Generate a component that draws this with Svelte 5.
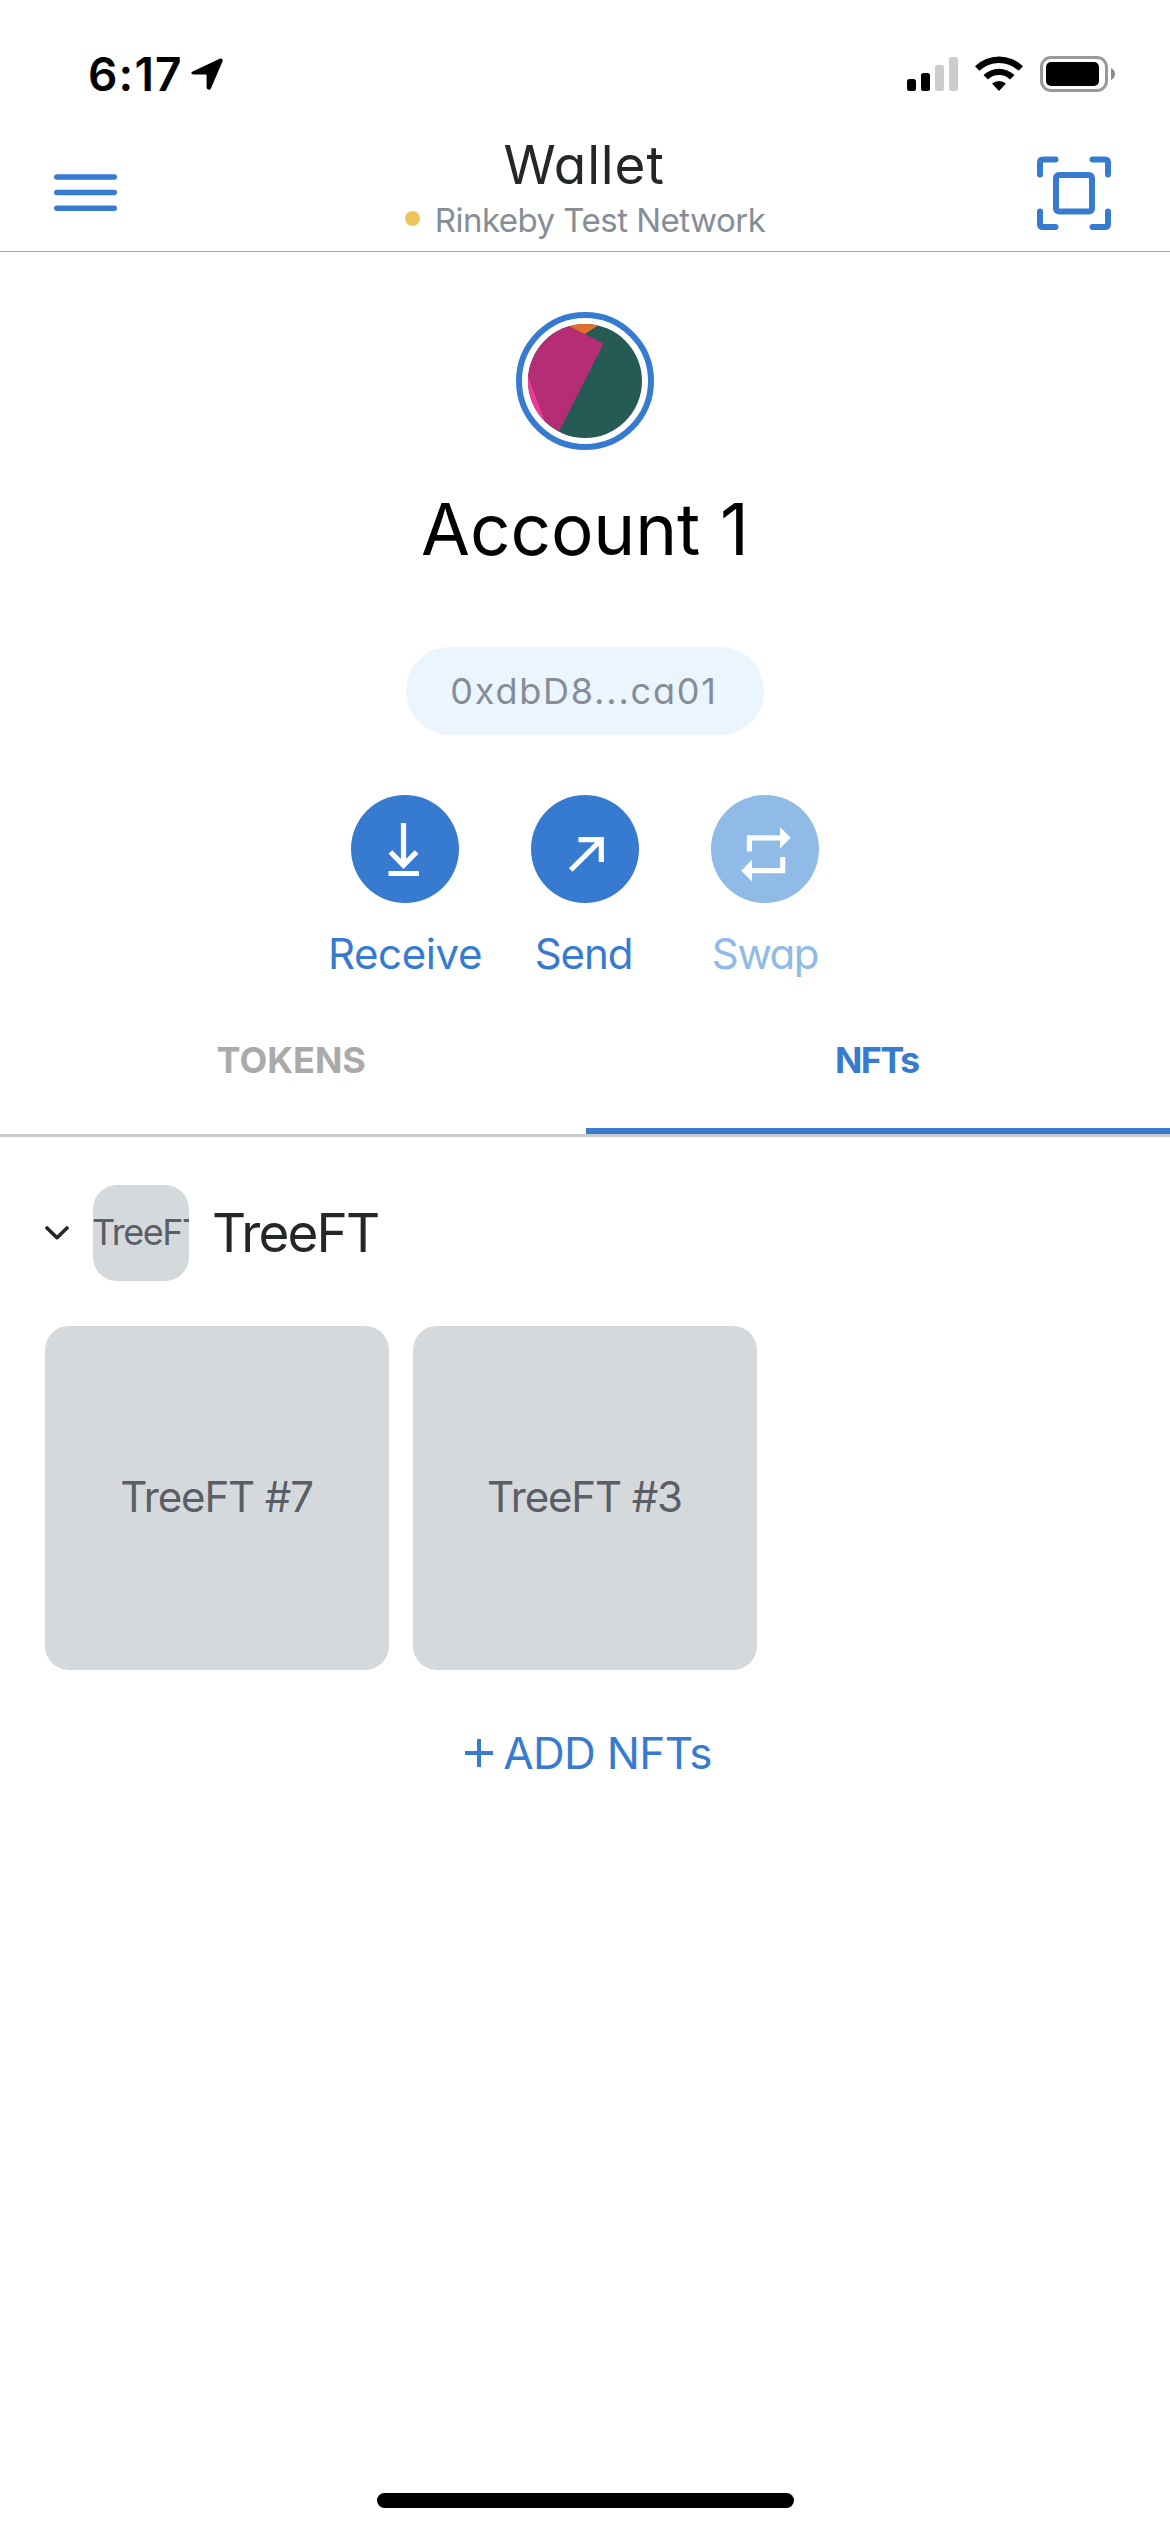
<script>
  const actions = [
    { id: 'receive', label: 'Receive' },
    { id: 'send', label: 'Send' },
    { id: 'swap', label: 'Swap', disabled: true }
  ];
  const nfts = ['TreeFT #7', 'TreeFT #3'];
</script>

<div class="screen">
  <div class="status">
    <span class="time">6:17</span>
    <svg class="location" width="32" height="33" viewBox="0 0 32 33">
      <path d="M2.2 13.2 28.6.7C30.8-.2 32.4 1.400 31.500 3.600L20 30.200C19 32.600 15.600 32 15.600 29.300V17.400Q15.600 16.400 14.600 16.400H2.800C-.3 16.400-.6 14.400 2.200 13.200Z" fill="#000" />
    </svg>
    <div class="indicators">
      <svg width="51" height="34" viewBox="0 0 51 34">
        <rect x="0" y="22" width="9" height="12" rx="2.500" />
        <rect x="14" y="16" width="9" height="18" rx="2.500" />
        <rect x="28" y="8" width="9" height="26" rx="2.500" fill="#ccc" />
        <rect x="42" y="0" width="9" height="34" rx="2.500" fill="#ccc" />
      </svg>
      <svg class="wifi" width="50" height="36" viewBox="0 0 50 36">
        <path d="M1 11.300A34.500 34.500 0 0 1 49 11.300L44.600 15.800A28.300 28.300 0 0 0 5.400 15.800Z" />
        <path d="M9.500 20A22.500 22.500 0 0 1 40.500 20L36 24.500A16 16 0 0 0 14 24.500Z" />
        <path d="M18 28.600A10.500 10.500 0 0 1 32 28.600L25 36Z" />
      </svg>
      <svg class="battery" width="76" height="36" viewBox="0 0 76 36">
        <rect x="1.500" y="1.500" width="65" height="33" rx="9.500" fill="none" stroke="#999" stroke-width="3" />
        <rect x="6" y="6" width="53" height="24" rx="5" />
        <path d="M71 12Q75 14 75 18Q75 22 71 24Z" fill="#8c8c8c" />
      </svg>
    </div>
  </div>

  <header>
    <svg class="menu" width="63" height="38" viewBox="0 0 63 38" stroke="#377bd1" stroke-width="5.500" stroke-linecap="round">
      <path d="M2.750 2.900H60.250M2.750 18.600H60.250M2.750 34.300H60.250" />
    </svg>
    <div class="heading">
      <div class="title">Wallet</div>
      <div class="network"><i></i><span>Rinkeby Test Network</span></div>
    </div>
    <svg class="scan" width="74" height="75" viewBox="0 0 74 75" fill="none" stroke="#377bd1" stroke-width="6" stroke-linecap="round">
      <path d="M3 18.500V6.500Q3 3.500 6 3.500H18.500M55.500 3.500H68Q71 3.500 71 6.500V18.500M71 55.500V68Q71 71 68 71H55.500M18.500 71H6Q3 71 3 68V55.500" />
      <rect x="19" y="19" width="36" height="36.500" rx="3" />
    </svg>
  </header>

  <section class="account">
    <div class="avatar">
      <svg width="114" height="114" viewBox="0 0 114 114">
        <clipPath id="disc"><circle cx="57" cy="57" r="57" /></clipPath>
        <g clip-path="url(#disc)">
          <rect width="114" height="114" fill="#265a55" />
          <path d="M35-5H80L57 10 40 6Z" fill="#e0702b" />
          <path d="M-10 40H10L18 97 0 114H-10Z" fill="#ec3a97" />
          <path d="M0-20 41 2 75.500 19.500 31 107.500 17 98 0 52Z" fill="#b52d74" />
        </g>
      </svg>
    </div>
    <div class="name">Account 1</div>
    <div class="address">0xdbD8...ca01</div>
    <div class="actions">
      {#each actions as action}
        <div class="action {action.id}" class:disabled={action.disabled}>
          <svg width="108" height="108" viewBox="0 0 108 108" fill="none" stroke="#fff" stroke-width="5.200">
            {#if action.id === 'receive'}
              <path d="M52.500 28V70M39.400 57 52.500 70.200 65.600 57M37.500 78.500H68" />
            {:else if action.id === 'send'}
              <path d="M47.500 44.700H70.300V67M70 45 39.700 75" />
            {:else}
              <path d="M38.400 56.500V42.900H71M71.700 62V75.600H39" />
              <path d="M69 32 79.700 42.800 69 53.600ZM41 64.800 30.200 75.700 41 86.500Z" fill="#fff" stroke="none" />
            {/if}
          </svg>
          <span>{action.label}</span>
        </div>
      {/each}
    </div>
  </section>

  <nav>
    <div class="tab tokens">TOKENS</div>
    <div class="tab nft active">NFTs</div>
  </nav>

  <section class="collection">
    <div class="collection-head">
      <svg width="24" height="16" viewBox="0 0 24 16" fill="none" stroke="#24272a" stroke-width="3.600" stroke-linecap="round" stroke-linejoin="round">
        <path d="M2 3 12 12.700 22 3" />
      </svg>
      <div class="thumb"><span>TreeFT</span></div>
      <div class="collection-name">TreeFT</div>
    </div>
    <div class="grid">
      {#each nfts as nft}
        <div class="card">{nft}</div>
      {/each}
    </div>
    <div class="add">
      <svg width="28" height="28" viewBox="0 0 28 28" stroke="#377bd1" stroke-width="4">
        <path d="M0 14H28M14 0V28" />
      </svg>
      <span>ADD NFTs</span>
    </div>
  </section>

  <div class="home"></div>
</div>

<style>
  :global(body) { background: #fff; }
  .screen {
    width: 1170px;
    height: 2532px;
    box-sizing: border-box;
    display: flex;
    flex-direction: column;
    overflow: hidden;
    background: #fff;
    font-family: Inter, sans-serif;
    font-feature-settings: 'cv11';
    white-space: nowrap;
  }
  svg { display: block; flex: none; }

  .status {
    height: 93px;
    padding: 56px 55px 0 88px;
    box-sizing: border-box;
    display: flex;
    align-items: flex-start;
  }
  .time { width: 91px; font-size: 46px; font-weight: 600; line-height: 37px; letter-spacing: 1.15px; }
  .location { margin: 2px 0 0 12px; }
  .indicators { display: flex; align-items: flex-end; height: 36px; margin-left: auto; }
  .indicators svg:first-child { margin-bottom: 1px; }
  .wifi { margin: 0 16px 1px 16px; }
  .battery { margin-right: -1px; }

  header {
    height: 159px;
    padding: 0 59px 0 54px;
    box-sizing: border-box;
    display: flex;
    justify-content: space-between;
    border-bottom: 1px solid #a7a7aa;
  }
  .menu { margin-top: 81px; }
  .scan { margin-top: 63px; }
  .heading { display: flex; flex-direction: column; align-items: center; margin-left: 16px; padding-top: 42px; }
  .title { height: 60px; line-height: 60px; font-size: 53px; letter-spacing: .89px; color: #24272a; margin-right: 2px; }
  .network {
    display: flex;
    align-items: center;
    gap: 15px;
    height: 51px;
    line-height: 51px;
    font-size: 33px;
    letter-spacing: -.51px;
    color: #868d97;
  }
  .network i { width: 15px; height: 15px; border-radius: 50%; background: #eec45c; margin-bottom: 4px; }

  .account { height: 768px; display: flex; flex-direction: column; align-items: center; padding-top: 60px; box-sizing: border-box; }
  .avatar { width: 138px; height: 138px; padding: 6px; border: 6px solid #377bd1; border-radius: 50%; box-sizing: border-box; }
  .name { margin-top: 39px; height: 80px; line-height: 80px; font-size: 71px; letter-spacing: -.1px; color: #000; }
  .address {
    margin-top: 78px;
    width: 358px;
    height: 88px;
    padding-right: 2px;
    box-sizing: border-box;
    border-radius: 44px;
    background: #eaf5ff;
    color: #868d97;
    font-size: 36px;
    line-height: 88px;
    letter-spacing: 1.79px;
    text-align: center;
  }
  .actions { display: flex; margin-top: 60px; }
  .action { width: 180px; display: flex; flex-direction: column; align-items: center; color: #377bd1; }
  .action svg { border-radius: 50%; background: #377bd1; }
  .action span { margin-top: 26px; height: 50px; line-height: 50px; font-size: 42px; }
  .receive span { letter-spacing: -.38px; }
  .send span { letter-spacing: -1.08px; margin-right: 3px; }
  .swap span { letter-spacing: -1.43px; }
  .disabled { color: #8fbbe6; }
  .disabled svg { background: #8fbbe6; }

  nav { display: flex; height: 117px; box-sizing: border-box; border-bottom: 3px solid #c9c9cb; }
  .tab {
    flex: 1;
    box-sizing: border-box;
    padding-top: 20px;
    line-height: 40px;
    font-size: 36px;
    font-weight: 700;
    text-align: center;
    color: #aaa;
  }
  .tokens { padding-right: 3px; }
  .nft { letter-spacing: -1.65px; padding-right: 2px; }
  .active { color: #377bd1; border-bottom: 6px solid #377bd1; }

  .collection { padding: 48px 45px 0; flex: 1; }
  .collection-head { display: flex; align-items: center; height: 96px; }
  .thumb {
    width: 96px;
    height: 96px;
    margin-left: 24px;
    border-radius: 24px;
    background: #d5d9dc;
    overflow: hidden;
    color: #5b5e66;
    font-size: 36px;
    line-height: 94px;
    letter-spacing: -1.48px;
  }
  .thumb span { margin-left: -1px; }
  .collection-name { margin-left: 23px; font-size: 53px; line-height: 96px; letter-spacing: -1.88px; color: #24272a; }
  .grid { display: flex; gap: 24px; margin-top: 45px; }
  .card {
    width: 344px;
    height: 344px;
    padding-right: 1px;
    box-sizing: border-box;
    border-radius: 24px;
    background: #d5d9dc;
    color: #5b5e66;
    font-size: 42px;
    line-height: 342px;
    letter-spacing: -1.14px;
    text-align: center;
  }
  .add {
    display: flex;
    align-items: center;
    justify-content: center;
    gap: 10px;
    height: 50px;
    margin-top: 58px;
    padding-left: 7px;
    font-size: 44px;
    line-height: 50px;
    letter-spacing: -.65px;
    color: #377bd1;
  }
  .home { width: 417px; height: 15px; margin: 0 auto 24px; border-radius: 8px; background: #000; }
</style>
